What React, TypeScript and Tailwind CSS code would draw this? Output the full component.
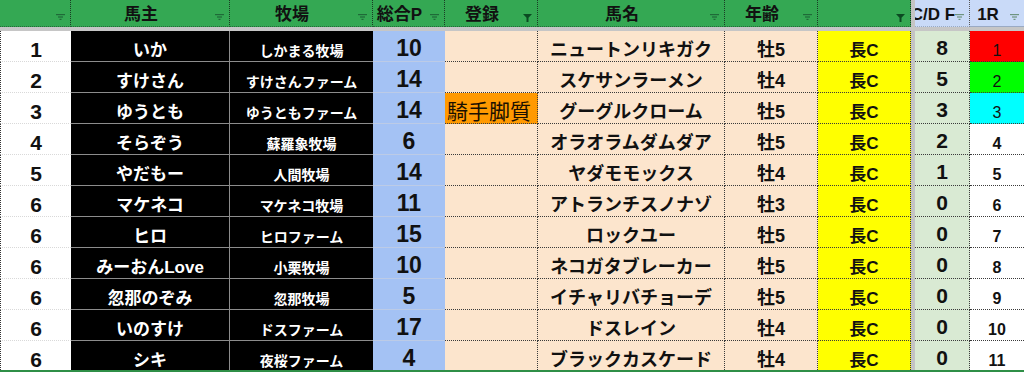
import React from 'react'

type Row = {
  rank: number
  owner: string
  farm: string
  pts: number
  reg: string
  horse: string
  age: string
  cd: number
  r1: number
  r1Class: string
}

const rows: Row[] = [
  { rank: 1, owner: 'いか', farm: 'しかまる牧場', pts: 10, reg: '', horse: 'ニュートンリキガク', age: '牡5', cd: 8, r1: 1, r1Class: 'bg-[#ff0000] font-normal' },
  { rank: 2, owner: 'すけさん', farm: 'すけさんファーム', pts: 14, reg: '', horse: 'スケサンラーメン', age: '牡4', cd: 5, r1: 2, r1Class: 'bg-[#00ff00] font-normal' },
  { rank: 3, owner: 'ゆうとも', farm: 'ゆうともファーム', pts: 14, reg: '騎手脚質', horse: 'グーグルクローム', age: '牡5', cd: 3, r1: 3, r1Class: 'bg-[#00ffff] font-normal' },
  { rank: 4, owner: 'そらぞう', farm: '蘇羅象牧場', pts: 6, reg: '', horse: 'オラオラムダムダア', age: '牡5', cd: 2, r1: 4, r1Class: 'bg-white font-bold' },
  { rank: 5, owner: 'やだもー', farm: '人間牧場', pts: 14, reg: '', horse: 'ヤダモモックス', age: '牡4', cd: 1, r1: 5, r1Class: 'bg-white font-bold' },
  { rank: 6, owner: 'マケネコ', farm: 'マケネコ牧場', pts: 11, reg: '', horse: 'アトランチスノナゾ', age: '牡3', cd: 0, r1: 6, r1Class: 'bg-white font-bold' },
  { rank: 6, owner: 'ヒロ', farm: 'ヒロファーム', pts: 15, reg: '', horse: 'ロックユー', age: '牡5', cd: 0, r1: 7, r1Class: 'bg-white font-bold' },
  { rank: 6, owner: 'みーおんLove', farm: '小栗牧場', pts: 10, reg: '', horse: 'ネコガタブレーカー', age: '牡5', cd: 0, r1: 8, r1Class: 'bg-white font-bold' },
  { rank: 6, owner: '忽那のぞみ', farm: '忽那牧場', pts: 5, reg: '', horse: 'イチャリバチョーデ', age: '牡5', cd: 0, r1: 9, r1Class: 'bg-white font-bold' },
  { rank: 6, owner: 'いのすけ', farm: 'ドスファーム', pts: 17, reg: '', horse: 'ドスレイン', age: '牡4', cd: 0, r1: 10, r1Class: 'bg-white font-bold' },
  { rank: 6, owner: 'シキ', farm: '夜桜ファーム', pts: 4, reg: '', horse: 'ブラックカスケード', age: '牡4', cd: 0, r1: 11, r1Class: 'bg-white font-bold' },
]

// sheets-style filter button (three narrowing lines)
const FilterIcon = ({ className }: { className: string }) => (
  <svg width="9" height="6" viewBox="0 0 9 6" className={`absolute right-[5px] bottom-[6px] fill-current ${className}`}>
    <rect x="0" y="0" width="9" height="1.2" />
    <rect x="2" y="2.4" width="5" height="1.2" />
    <rect x="3.5" y="4.8" width="2" height="1.2" />
  </svg>
)

// filter applied
const FunnelIcon = () => (
  <svg width="9" height="8" viewBox="0 0 9 8" className="absolute right-[5px] bottom-[4px] fill-[#0b4a22]">
    <path d="M0 0H9L5.5 3.8V8H3.5V3.8Z" />
  </svg>
)

const Head = ({ label, last, funnel }: { label: string; last?: boolean; funnel?: boolean }) => (
  <div
    className={`relative h-[27px] bg-[#34a853] border-b border-[#236b38] flex items-center justify-center pr-[18px] pt-[2px] text-[17px] font-bold text-[#111] leading-none whitespace-nowrap ${
      last ? '' : 'border-r border-r-[#1b3a25] border-dotted'
    }`}
  >
    {label}
    {funnel ? <FunnelIcon /> : <FilterIcon className="text-[#1f6a38]" />}
  </div>
)

const cellBase = 'h-[31px] flex items-end justify-center leading-none whitespace-nowrap overflow-hidden'
const dotted = 'border-r border-b border-dotted border-[#3a3a3a]'

export default function App() {
  return (
    <div className="w-[1024px] h-[373px] overflow-hidden bg-white font-['Liberation_Sans','Noto_Sans_CJK_JP',sans-serif]">
      <div className="grid grid-cols-[71px_159px_143px_72px_93px_187px_93px_93px_4px_55px_54px]">
        {/* header */}
        <Head label="" />
        <Head label="馬主" />
        <Head label="牧場" />
        <Head label="総合P" />
        <Head label="登録" funnel />
        <Head label="馬名" />
        <Head label="年齢" />
        <Head label="" funnel />
        <div className="h-[27px] bg-[#c4c4c4]" />
        <div className="relative h-[27px] bg-[#c9daf8] border-b border-[#9aaac4] border-r border-r-[#555] border-dotted flex items-center justify-center pr-[18px] pt-[2px] text-[17px] font-bold text-[#111] leading-none whitespace-nowrap overflow-hidden">
          C/D F
          <FilterIcon className="text-[#6f9480]" />
        </div>
        <div className="relative h-[27px] bg-[#c9daf8] border-b border-[#9aaac4] flex items-center justify-center pr-[18px] pt-[2px] text-[17px] font-bold text-[#111] leading-none whitespace-nowrap">
          1R
          <FilterIcon className="text-[#6f9480]" />
        </div>

        {/* frozen row line */}
        <div className="col-span-11 h-[4px] bg-[#c6c6c6]" />

        {rows.map((r, i) => {
          const lastRow = i === rows.length - 1
          return (
            <React.Fragment key={i}>
              <div className={`${cellBase} bg-white border-l border-dotted border-l-[#333] border-b border-b-[#d9d9d9] pb-[1px] text-[21px] font-bold text-[#111]`}>
                {r.rank}
              </div>
              <div className={`${cellBase} bg-black border-r border-b border-[#8c8c8c] pb-[2px] text-[17px] font-bold text-white`}>
                {r.owner}
              </div>
              <div className={`${cellBase} bg-black border-b border-[#8c8c8c] pb-[3px] text-[14px] font-bold text-white`}>
                {r.farm}
              </div>
              <div className={`${cellBase} bg-[#a4c2f4] border-b border-[#bccbe6] pb-[1px] text-[23px] font-bold text-[#111]`}>
                {r.pts}
              </div>
              <div
                className={`${cellBase} ${dotted} justify-start pb-[1px] ${
                  r.reg ? 'bg-[#ff9900] pl-[2px] text-[21px] text-[#1a1000]' : 'bg-[#fce5cd]'
                }`}
              >
                {r.reg}
              </div>
              <div className={`${cellBase} ${dotted} bg-[#fce5cd] pb-[2px] text-[18px] font-bold text-[#111]`}>
                {r.horse}
              </div>
              <div className={`${cellBase} ${dotted} bg-[#fce5cd] pb-[2px] text-[18px] font-bold text-[#111]`}>
                {r.age}
              </div>
              <div className={`${cellBase} ${dotted} bg-[#ffff00] pb-[2px] text-[17px] font-semibold text-[#111]`}>長C</div>
              <div className="h-[31px] bg-[#c4c4c4]" />
              <div className={`${cellBase} ${dotted} bg-[#d9ead3] pb-[3px] text-[21px] font-bold text-[#111]`}>
                {r.cd}
              </div>
              <div className={`${cellBase} border-b border-dotted border-[#3a3a3a] pb-[2px] text-[16px] text-[#111] ${r.r1Class}`}>
                {r.r1}
              </div>
              {lastRow && <div className="col-span-11 h-[2px] bg-[#2f8f47] -mt-[2px]" />}
            </React.Fragment>
          )
        })}
      </div>
    </div>
  )
}
